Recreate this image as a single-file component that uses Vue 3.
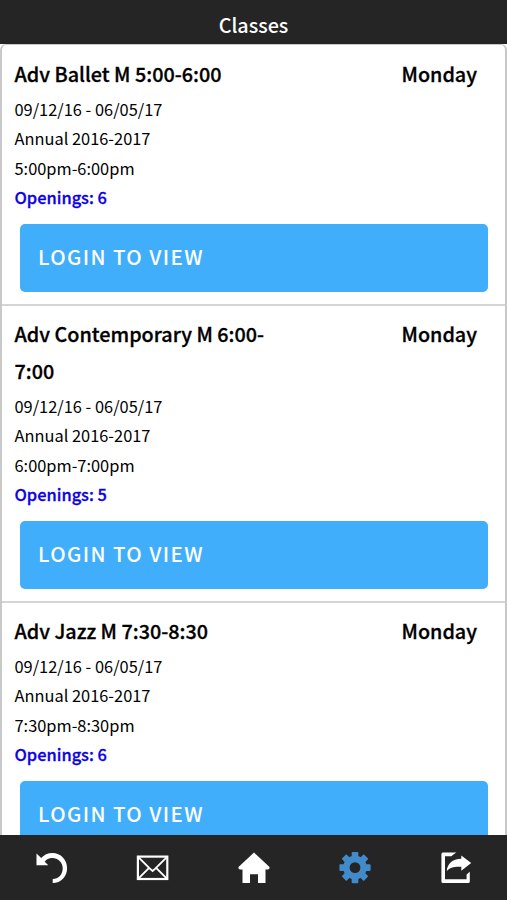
<template>
  <div class="app">
    <header class="header">
      <h1>Classes</h1>
    </header>

    <main class="content">
      <ul class="class-list">
        <li v-for="item in classes" :key="item.name" class="class-item">
          <div class="title-row">
            <h2 class="name">{{ item.name }}</h2>
            <span class="day">{{ item.day }}</span>
          </div>
          <p class="detail dates">{{ item.dates }}</p>
          <p class="detail session">{{ item.session }}</p>
          <p class="detail time">{{ item.time }}</p>
          <p class="detail openings">Openings: {{ item.openings }}</p>
          <button class="login-btn">LOGIN TO VIEW</button>
        </li>
      </ul>
    </main>

    <nav class="tab-bar">
      <a class="tab" aria-label="Back">
        <svg width="34" height="34" viewBox="0 0 34 34">
          <path d="M2.5 2.4 V14.2 H14.3 L10.7 10.7 C12.5 8.3 15 7 18 7 C24.3 7 28.7 11.4 28.7 17.2 C28.7 23.5 24.5 28 18.7 28 V32 C27 32 33.1 25.5 33.1 17.2 C33.1 8.7 26.8 2 18.5 2 C13.8 2 9.9 3.9 7.2 7.1 Z" fill="#fff" />
        </svg>
      </a>
      <a class="tab" aria-label="Messages">
        <svg width="34" height="34" viewBox="0 0 34 34">
          <g fill="none" stroke="#fff" stroke-width="2.2">
            <rect x="2.9" y="5.6" width="29.4" height="22.4" />
            <path d="M3.6 6.4 L14.9 17.6 L17.6 20 L20.3 17.6 L31.6 6.4 M3.6 27.4 L14.1 16.8 M31.6 27.4 L21.1 16.8" stroke-width="1.9" />
          </g>
        </svg>
      </a>
      <a class="tab" aria-label="Home">
        <svg width="34" height="34" viewBox="0 0 34 34">
          <path d="M17 1.5 L32.5 16.1 Q32.8 18.5 31 18.5 H28.5 V32 H21 V23.3 H13 V32 H5.5 V18.5 H3 Q1.2 18.5 1.5 16.1 Z" fill="#fff" />
        </svg>
      </a>
      <a class="tab active" aria-label="Settings">
        <svg width="34" height="34" viewBox="0 0 34 34">
          <g fill="#428bca">
            <rect v-for="angle in [0, 45, 90, 135]" :key="angle" x="13.7" y="1" width="6.6" height="31.2" rx="0.8" :transform="`rotate(${angle} 17 16.6)`" />
            <circle cx="17" cy="16.6" r="11.8" />
          </g>
          <circle cx="17" cy="16.6" r="5.4" fill="#252525" />
        </svg>
      </a>
      <a class="tab" aria-label="Share">
        <svg width="34" height="34" viewBox="0 0 34 34">
          <path d="M17.4 1.5 H3.9 Q2.4 1.5 2.4 3 V30.5 Q2.4 32 3.9 32 H29.3 Q30.8 32 30.8 30.5 V20.8 L27.6 23.5 V28.2 H6 V5.2 H12.4 Q14.6 3.2 17.4 1.5 Z" fill="#fff" />
          <path d="M22.3 4.4 L32.2 12 L22.3 19.8 V15.8 C14.8 15.4 11.3 16.5 7.7 20.1 C8.3 13 13.3 8 22.3 7.8 Z" fill="#fff" />
        </svg>
      </a>
    </nav>
  </div>
</template>

<script setup>
const classes = [
  {
    name: 'Adv Ballet M 5:00-6:00',
    day: 'Monday',
    dates: '09/12/16 - 06/05/17',
    session: 'Annual 2016-2017',
    time: '5:00pm-6:00pm',
    openings: 6
  },
  {
    name: 'Adv Contemporary M 6:00-7:00',
    day: 'Monday',
    dates: '09/12/16 - 06/05/17',
    session: 'Annual 2016-2017',
    time: '6:00pm-7:00pm',
    openings: 5
  },
  {
    name: 'Adv Jazz M 7:30-8:30',
    day: 'Monday',
    dates: '09/12/16 - 06/05/17',
    session: 'Annual 2016-2017',
    time: '7:30pm-8:30pm',
    openings: 6
  }
]
</script>

<style>
body {
  margin: 0;
  background: #fff;
}
</style>

<style scoped>
.app {
  display: flex;
  flex-direction: column;
  height: 100vh;
  overflow: hidden;
  font-family: "Noto Sans CJK SC", "Noto Sans", sans-serif;
  color: #000;
}

.header {
  flex: none;
  box-sizing: border-box;
  height: 44px;
  padding-top: 6px;
  background: #252525;
  text-align: center;
}

.header h1 {
  margin: 0;
  font-size: 19.8px;
  line-height: 37px;
  font-weight: 500;
  color: #fff;
}

.content {
  flex: 1;
  min-height: 0;
  overflow: hidden;
}

.class-list {
  margin: 0;
  padding: 0.7px 0 0;
  list-style: none;
  border: 2px solid #c8c8c8;
  border-top-width: 1px;
  border-radius: 6px;
}

.class-item {
  box-sizing: border-box;
  padding: 9.3px 17px 11.5px 12.5px;
  border-bottom: 2px solid #d5d5d5;
}

.title-row {
  display: flex;
  align-items: flex-start;
  justify-content: space-between;
  padding-right: 11px;
}

.name,
.day {
  margin: 0;
  font-size: 19.8px;
  line-height: 37px;
  font-weight: 500;
  -webkit-text-stroke: 0.3px currentColor;
}

.name {
  width: 260px;
}

.detail {
  margin: 0;
  font-size: 16.4px;
  line-height: 29.3px;
}

.dates {
  margin-top: 3px;
}

.openings {
  font-weight: 500;
  color: #0d00e6;
  -webkit-text-stroke: 0.3px currentColor;
}

.login-btn {
  display: block;
  width: 468px;
  height: 68.5px;
  margin: 11.5px 0 0 5.5px;
  padding: 0 18px 3px;
  border: none;
  border-radius: 5px;
  background: #41aefb;
  color: #fff;
  font-family: inherit;
  font-size: 20.5px;
  font-weight: 500;
  letter-spacing: 1.4px;
  text-align: left;
}

.tab-bar {
  display: flex;
  flex: none;
  height: 65px;
  background: #252525;
}

.tab {
  display: flex;
  flex: 1;
  align-items: center;
  justify-content: center;
}
</style>
